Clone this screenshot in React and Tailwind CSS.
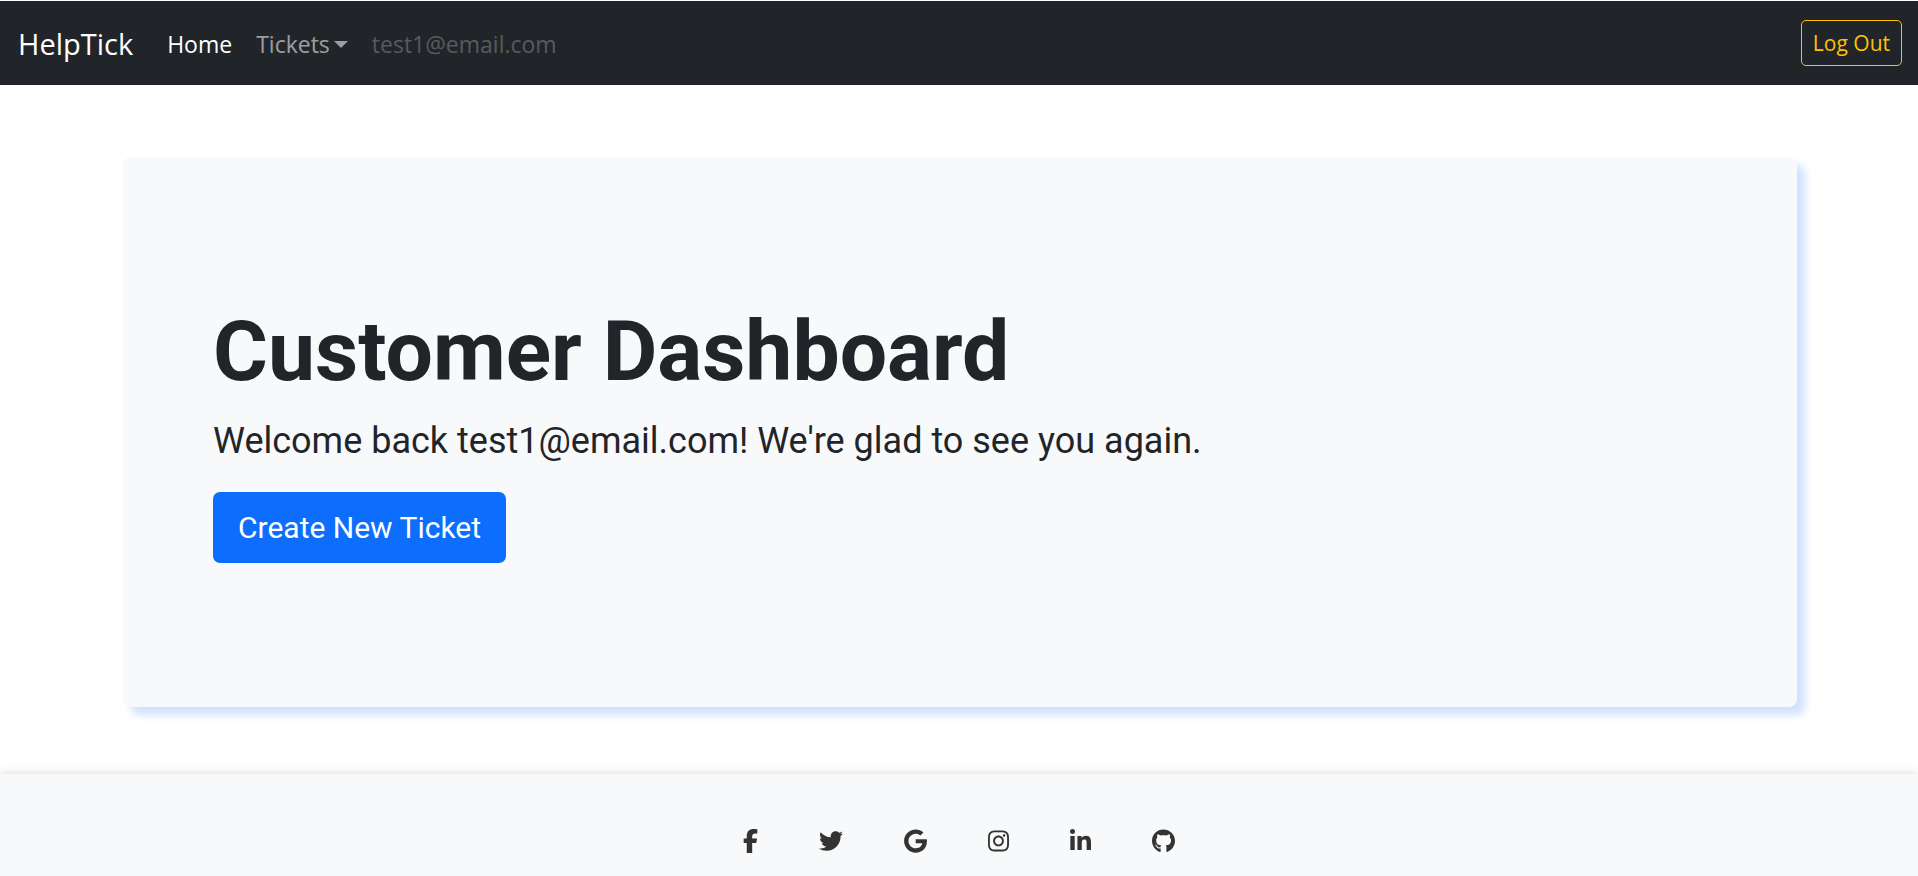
import React from "react";
import { FaTwitter, FaGoogle, FaInstagram, FaLinkedinIn, FaGithub } from "react-icons/fa";

function FacebookIcon({ className }) {
  return (
    <svg viewBox="0 0 320 512" className={className} fill="currentColor" aria-hidden="true">
      <path d="M80 299.3V512H196V299.3h86.5l18-97.8H196V166.9c0-51.7 20.3-71.5 72.7-71.5c16.3 0 29.4 .4 37 1.2V7.9C291.4 4 256.4 0 236.2 0C129.3 0 80 50.5 80 159.4v42.1H14v97.8H80z" />
    </svg>
  );
}

const socials = [
  { name: "Facebook", Icon: FacebookIcon, size: "w-[15px]" },
  { name: "Twitter", Icon: FaTwitter, size: "w-6" },
  { name: "Google", Icon: FaGoogle, size: "w-[23px]" },
  { name: "Instagram", Icon: FaInstagram, size: "w-[21px]" },
  { name: "LinkedIn", Icon: FaLinkedinIn, size: "w-[21px]" },
  { name: "GitHub", Icon: FaGithub, size: "w-[23px]" },
];

function Navbar() {
  return (
    <nav className="mt-px flex h-[84px] items-center bg-[#212529] px-[18px] pr-4 font-['Open_Sans','Noto_Sans',sans-serif]">
      <div className="flex items-center pt-0.5">
        <a href="#" className="mr-[34px] text-[29px] leading-10 text-white">HelpTick</a>
        <div className="flex items-center gap-6 text-[23px] leading-9">
          <a href="#" className="text-white">Home</a>
          <button type="button" className="flex items-center gap-1 text-white/55">
            Tickets
            <svg viewBox="0 0 14 7" className="h-[7px] w-[14px]" fill="currentColor" aria-hidden="true">
              <path d="M0 0h14L7 7z" />
            </svg>
          </button>
          <span className="text-white/25">test1@email.com</span>
        </div>
      </div>
      <button type="button" className="ml-auto h-[46px] rounded-[5px] border border-[#ffc107] px-[11px] text-[21px] leading-8 text-[#ffc107]">
        Log Out
      </button>
    </nav>
  );
}

function Hero() {
  return (
    <main className="pt-[72px] pr-[121px] pb-[67px] pl-[123px]">
      <section className="flex flex-col items-start rounded-lg bg-[#f8f9fa] px-[90px] pt-[145px] pb-36 shadow-[8px_8px_8px_#cfe2ff]">
        <h1 className="text-[84px] leading-[100px] font-bold">Customer Dashboard</h1>
        <p className="mt-3 text-[36px] leading-[54px]">Welcome back test1@email.com! We're glad to see you again.</p>
        <button type="button" className="mt-6 rounded-[7px] bg-[#0d6efd] px-[25px] py-[13px] text-[30px] leading-[45px] text-white">
          Create New Ticket
        </button>
      </section>
    </main>
  );
}

function Footer() {
  return (
    <footer className="flex grow items-start justify-center gap-[61px] bg-[#f8f9fa] pt-[55px] text-[#333333] shadow-[0_0_10px_rgba(0,0,0,0.16)]">
      {socials.map(({ name, Icon, size }) => (
        <a key={name} href="#" aria-label={name}>
          <Icon className={`h-6 ${size}`} />
        </a>
      ))}
    </footer>
  );
}

export default function App() {
  return (
    <div className="flex min-h-screen flex-col overflow-hidden bg-white font-[Roboto,sans-serif] text-[#212529]">
      <Navbar />
      <Hero />
      <Footer />
    </div>
  );
}
